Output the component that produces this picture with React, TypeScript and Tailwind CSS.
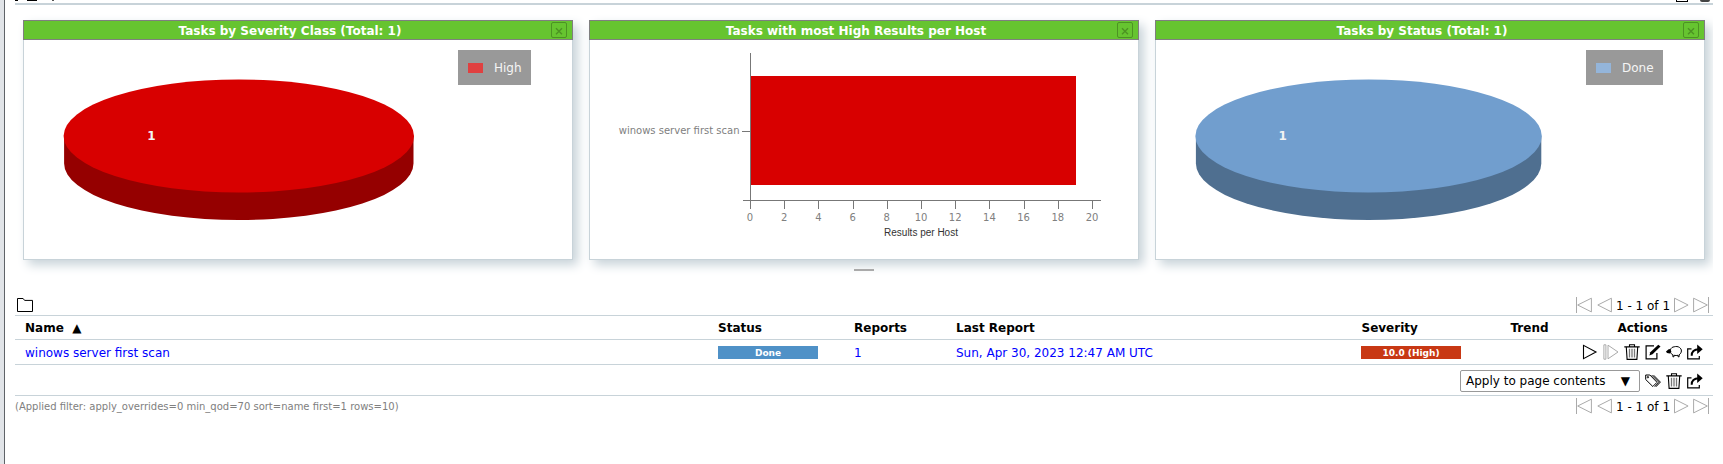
import type { ReactNode } from 'react';

function Icon({ children, className = 'text-black' }: { children: ReactNode; className?: string }) {
  return (
    <svg
      viewBox="0 0 16 16"
      width="16"
      height="16"
      fill="none"
      stroke="currentColor"
      strokeWidth="1"
      className={`block shrink-0 ${className}`}
    >
      {children}
    </svg>
  );
}

const FolderIcon = () => (
  <Icon>
    <path d="M.5 14.500V1.500h5.600l1.500 1.900h7.900v11.100z" />
  </Icon>
);
const StartIcon = () => (
  <Icon>
    <path d="M1.500 1.300v13.400L14 8z" strokeWidth="1.100" />
  </Icon>
);
const ResumeIcon = () => (
  <Icon className="text-[#aaaaaa]">
    <path d="M.9.8h2v14.400h-2zM5 1.200v13.600L15 8z" />
  </Icon>
);
const TrashIcon = () => (
  <Icon>
    <path d="M.3 2.900h15.400M5.500 2.800V.7h5v2.100M2.300 3.200l.8 12.200h9.800l.8-12.200" strokeWidth="1.100" />
    <path d="M5.500 4.800v8.800M8 4.800v8.800M10.500 4.800v8.800" stroke="#777777" strokeWidth="1.300" />
  </Icon>
);
const EditIcon = () => (
  <Icon>
    <path d="M9 1.800H1.100v13.100h10.800V9" strokeWidth="1.200" />
    <path d="M4.400 11.500l.9-3.200 8-7.600 2.200 1.700-8 7.800z" fill="currentColor" stroke="none" />
  </Icon>
);
const CloneIcon = () => (
  <Icon>
    <path
      d="M4.500 5.700C5 3.800 6.500 3 8.200 2.800c1.800-.5 3.800-.4 5.200.6 1.300.9 2.100 2.200 2 3.600-.1 1.700-1 3-2.300 3.800v2h-1v-1.500c-1.200.3-2.600.3-4.200 0v1.500h-1v-2C5.600 10.200 4.900 9.500 4.600 8.500"
      strokeWidth="1"
    />
    <path d="M0 7.500l2.600-2.200 1.900-.2.900 2.900-1.600 1.400-2.800-.4z" fill="currentColor" stroke="none" />
  </Icon>
);
const ExportIcon = () => (
  <Icon>
    <path d="M4.500 4.800H.7v10.100h11.600v-3" strokeWidth="1.200" />
    <path d="M4.700 11.800C4.500 7.500 7 5.300 12 5.200" strokeWidth="2" />
    <path d="M10.200.5l5.500 4.700-5.500 4.700z" fill="currentColor" stroke="none" />
  </Icon>
);
const TagsIcon = () => (
  <Icon>
    <path d="M.7 2v4.500l7.100 7 4.200-4.200L4.900 2z" />
    <path d="M6.700 2.100l7.200 7.200-4.200 4.300M8.600 2.200l6.800 6.900-4.500 4.700" />
    <circle cx="2.900" cy="4.200" r=".7" />
  </Icon>
);

const FirstIcon = () => (
  <Icon className="text-[#aaaaaa]">
    <path d="M.5 0v16M15.400 1.200v13.700L1.700 8z" />
  </Icon>
);
const PrevIcon = () => (
  <Icon className="text-[#aaaaaa]">
    <path d="M14.400 1.200v13.700L.8 8z" />
  </Icon>
);
const NextIcon = () => (
  <Icon className="text-[#aaaaaa]">
    <path d="M1.500 1.200v13.700L15.100 8z" />
  </Icon>
);
const LastIcon = () => (
  <Icon className="text-[#aaaaaa]">
    <path d="M15.500 0v16M.6 1.200v13.700L14.300 8z" />
  </Icon>
);

function Pagination() {
  return (
    <div className="flex h-4 items-center">
      <FirstIcon />
      <div className="w-[5px]" />
      <PrevIcon />
      <span className="w-[60px] pt-[2px] text-center whitespace-nowrap">1 - 1 of 1</span>
      <NextIcon />
      <div className="w-[4px]" />
      <LastIcon />
    </div>
  );
}

function Card({ title, children }: { title: string; children: ReactNode }) {
  return (
    <section className="flex h-[240px] w-[550px] shrink-0 flex-col bg-white shadow-[5px_5px_10px_#c8d3d9]">
      <header className="flex h-5 shrink-0 items-center border border-[#7f7f7f] bg-[#66c430] pr-[5px]">
        <h2 className="flex-1 pt-[2px] pl-[5px] text-center font-bold text-white">{title}</h2>
        <span className="flex h-4 w-4 items-center justify-center rounded-[2px] border border-[#4c9323] pt-px text-[#4c9323]">
          <svg width="8" height="8" viewBox="0 0 8 8" stroke="currentColor" strokeWidth="1.400">
            <path d="M1 1.300l6 6M7 1.300l-6 6" />
          </svg>
        </span>
      </header>
      <div className="flex flex-1 border border-t-0 border-[#c8d3d9]">{children}</div>
    </section>
  );
}

interface PieProps {
  width: number;
  cx: number;
  rx: number;
  labelX: number;
  top: string;
  side: string;
}

function Pie({ width, cx, rx, labelX, top, side }: PieProps) {
  const cy = 96;
  const ry = 56.5;
  const depth = 27.5;
  return (
    <svg width={width} height="219" className="block shrink-0">
      <path
        fill={side}
        d={`M${cx - rx + 0.5} ${cy}v${depth}a${rx - 0.5} ${ry} 0 0 0 ${2 * rx - 1} 0v${-depth}z`}
      />
      <ellipse cx={cx} cy={cy} rx={rx} ry={ry} fill={top} />
      <text x={labelX} y="100" textAnchor="middle" fill="#f3f3f3" className="text-[12px] font-bold">
        1
      </text>
    </svg>
  );
}

function Legend({ label, swatch }: { label: string; swatch: string }) {
  return (
    <div className="mt-[10px] flex h-[35px] items-center bg-[#999999] pr-[9px] pl-[10px] text-[#f5f5f5]">
      <span className={`mt-px mr-[11px] h-[10px] w-[15px] ${swatch}`} />
      <span className="pt-[2px]">{label}</span>
    </div>
  );
}

const TICKS = [0, 2, 4, 6, 8, 10, 12, 14, 16, 18, 20];

function ResultsChart() {
  const zero = 160.5;
  return (
    <svg width="548" height="219" className="block">
      <rect x="161" y="36" width="325" height="109" fill="#d80000" />
      <g stroke="#777777" strokeWidth="1" shapeRendering="crispEdges">
        <path d="M160.500 13v156M153 160.500h358M152 91.500h8" />
        {TICKS.map((t) => (
          <path key={t} d={`M${zero + t * 17.1} 160.500v8`} />
        ))}
      </g>
      <g fill="#808080" className="text-[10px]">
        <text x="149.500" y="94" textAnchor="end">
          winows server first scan
        </text>
        {TICKS.map((t) => (
          <text key={t} x={160 + t * 17.1} y="181" textAnchor="middle">
            {t}
          </text>
        ))}
      </g>
      <text
        x="331"
        y="196"
        textAnchor="middle"
        fill="#333333"
        className="font-['Liberation_Sans',sans-serif] text-[10px]"
      >
        Results per Host
      </text>
    </svg>
  );
}

const COLUMNS = 'grid grid-cols-[693px_136px_102px_405px_120px_101px_131px] items-center border-b border-[#c8d3d9]';

export default function App() {
  return (
    <div className="flex h-[464px] w-[1723px] overflow-hidden bg-white font-['DejaVu_Sans',sans-serif] text-[12px] leading-[15px] text-black">
      <div className="w-[5px] shrink-0 border-r border-[#5f6368] bg-[#e1e4e8]" />
      <main className="ml-[9px] flex w-[1699px] flex-col overflow-hidden pl-px">
        <div className="flex h-[5px] shrink-0 items-start border-b-2 border-[#c8d3d9]">
          <span className="h-px w-[3px] bg-black" />
          <span className="ml-[9px] h-px w-[10px] bg-black" />
          <span className="ml-[15px] h-px w-[2px] bg-[#555555]" />
          <span className="ml-auto h-[2px] w-[12px] border border-t-0 border-black" />
          <span className="mr-[3px] ml-[12px] h-[2px] w-[10px] rounded-b-full bg-[#444444]" />
        </div>

        <div className="mt-[15px] ml-2 flex gap-4">
          <Card title="Tasks by Severity Class (Total: 1)">
            <Pie width={434} cx={214.8} rx={175.2} labelX={127.4} top="#d80000" side="#950000" />
            <Legend label="High" swatch="bg-[#e04040]" />
          </Card>
          <Card title="Tasks with most High Results per Host">
            <ResultsChart />
          </Card>
          <Card title="Tasks by Status (Total: 1)">
            <Pie width={430} cx={212.6} rx={173.2} labelX={126.6} top="#719ece" side="#4f6f90" />
            <Legend label="Done" swatch="bg-[#94b5da]" />
          </Card>
        </div>

        <div className="mt-[9px] ml-[839px] h-[2px] w-5 shrink-0 bg-[#aaaaaa]" />

        <div className="mt-[26px] flex h-[19px] shrink-0 border-b border-[#c8d3d9] pl-[2px]">
          <FolderIcon />
          <div className="mr-1 ml-auto">
            <Pagination />
          </div>
        </div>

        <div className={`${COLUMNS} h-6 shrink-0 pt-px pl-[10px] font-bold`}>
          <span className="flex">
            Name<span className="ml-[8.5px]">▲</span>
          </span>
          <span>Status</span>
          <span>Reports</span>
          <span>Last Report</span>
          <span className="pl-[0.5px]">Severity</span>
          <span className="pr-[4px] text-center">Trend</span>
          <span className="pr-[10px] text-center">Actions</span>
        </div>

        <div className={`${COLUMNS} h-[25px] shrink-0 pl-[10px] text-[#0000ff]`}>
          <a className="pt-[2px]">winows server first scan</a>
          <div className="mt-px h-[13px] w-[100px] bg-[#4f91c7] text-center text-[9px] leading-[14px] font-bold text-white">
            Done
          </div>
          <a className="pt-[2px]">1</a>
          <a className="pt-[2px]">Sun, Apr 30, 2023 12:47 AM UTC</a>
          <div className="mt-px h-[13px] w-[100px] bg-[#c83814] text-center text-[9px] leading-[14px] font-bold text-white">
            10.0 (High)
          </div>
          <span />
          <div className="flex gap-[5px]">
            <StartIcon />
            <ResumeIcon />
            <TrashIcon />
            <EditIcon />
            <CloneIcon />
            <ExportIcon />
          </div>
        </div>

        <div className="flex h-[31px] shrink-0 items-center justify-end gap-[5px] border-b border-[#c8d3d9] pt-px pr-[10px]">
          <div className="flex h-[22px] w-[180px] items-center justify-between rounded-[2px] border border-[#999999] pt-px pr-[9px] pl-[5px]">
            <span>Apply to page contents</span>
            <span>▼</span>
          </div>
          <TagsIcon />
          <TrashIcon />
          <ExportIcon />
        </div>

        <div className="mt-[2px] flex items-center justify-between pr-1">
          <span className="text-[10px] text-[#808080]">
            (Applied filter: apply_overrides=0 min_qod=70 sort=name first=1 rows=10)
          </span>
          <Pagination />
        </div>
      </main>
    </div>
  );
}
